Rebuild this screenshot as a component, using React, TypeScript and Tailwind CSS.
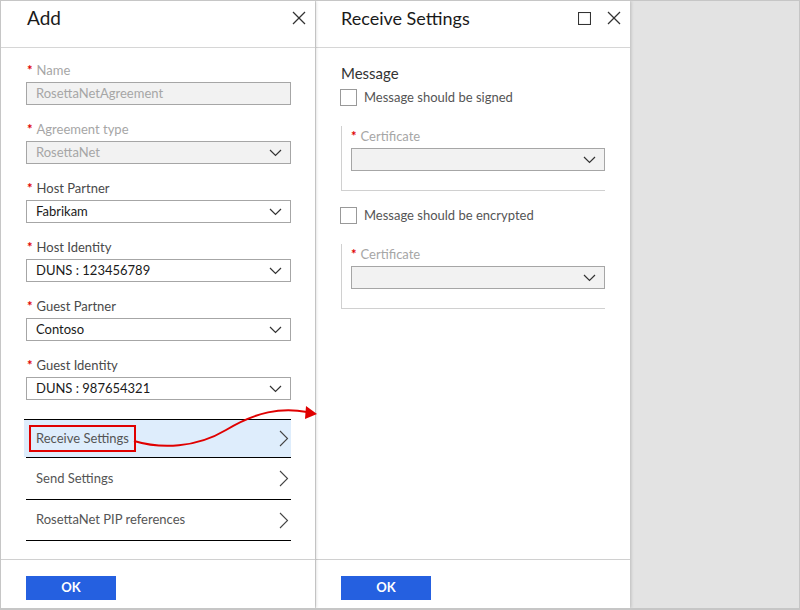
import React from 'react';

// 공통 아이콘
const ChevronDown = () => (
  <svg width="13" height="8" viewBox="0 0 13 8" className="shrink-0">
    <polyline points="1,1 6.5,6.5 12,1" fill="none" stroke="#333" strokeWidth="1.2" />
  </svg>
);

const ChevronRight = () => (
  <svg width="10" height="17" viewBox="0 0 10 17" className="shrink-0">
    <polyline points="1,1 8.5,8.5 1,16" fill="none" stroke="#444" strokeWidth="1.1" />
  </svg>
);

const CloseIcon = () => (
  <svg width="14" height="14" viewBox="0 0 14 14">
    <line x1="1" y1="1" x2="13" y2="13" stroke="#333" strokeWidth="1.2" />
    <line x1="13" y1="1" x2="1" y2="13" stroke="#333" strokeWidth="1.2" />
  </svg>
);

const MaxIcon = () => (
  <svg width="13" height="13" viewBox="0 0 13 13">
    <rect x="0.5" y="0.5" width="12" height="12" fill="none" stroke="#333" strokeWidth="1.1" />
  </svg>
);

const Star = () => <span className="mr-[4px] text-[13px] font-bold text-[#e00000]">*</span>;

type Field = { label: string; value: string; disabled?: boolean; select?: boolean };

const fields: Field[] = [
  { label: 'Name', value: 'RosettaNetAgreement', disabled: true },
  { label: 'Agreement type', value: 'RosettaNet', disabled: true, select: true },
  { label: 'Host Partner', value: 'Fabrikam', select: true },
  { label: 'Host Identity', value: 'DUNS : 123456789', select: true },
  { label: 'Guest Partner', value: 'Contoso', select: true },
  { label: 'Guest Identity', value: 'DUNS : 987654321', select: true },
];

function FormField({ f }: { f: Field }) {
  return (
    <div className="mb-[16px]">
      <div className={`flex h-[18px] items-center pl-[1px] text-[13px] ${f.disabled ? 'text-[#a6a6a6]' : 'text-[#4a4a4a]'}`}>
        <Star />
        {f.label}
      </div>
      <div
        className={`mt-[2px] flex h-[23px] w-[265px] items-center justify-between border border-[#a6a6a6] pl-[9px] pr-[8px] text-[13px] ${
          f.disabled ? 'bg-[#f2f2f2] text-[#a6a6a6]' : 'bg-white text-[#1a1a1a]'
        }`}
      >
        <span>{f.value}</span>
        {f.select && <ChevronDown />}
      </div>
    </div>
  );
}

function Certificate() {
  return (
    <div className="w-[264px] border-b border-l border-[#d0d0d0] pb-[19px] pl-[9px] pt-[2px]">
      <div className="flex h-[18px] items-center text-[13px] text-[#a6a6a6]">
        <Star />
        Certificate
      </div>
      <div className="mt-[2px] flex h-[23px] w-[254px] items-center justify-end border border-[#a6a6a6] bg-[#f2f2f2] pr-[8px]">
        <ChevronDown />
      </div>
    </div>
  );
}

function Checkbox({ label }: { label: string }) {
  return (
    <div className="flex h-[17px] items-center">
      <span className="ml-[-1px] h-[17px] w-[17px] border border-[#999] bg-white" />
      <span className="ml-[7px] text-[13px] text-[#555]">{label}</span>
    </div>
  );
}

function OkButton() {
  return (
    <div className="flex h-[24px] w-[90px] items-center justify-center bg-[#2560e0] text-[13px] font-bold text-white">
      OK
    </div>
  );
}

export default function App() {
  return (
    <div className="relative h-[610px] w-[800px] overflow-hidden border border-b-2 border-[#c6c6c6] bg-[#e3e3e3] font-['Lato','Noto_Sans',sans-serif]">
      <div className="flex h-full">
        {/* 왼쪽 패널 */}
        <div className="relative z-10 flex h-full w-[314px] flex-col bg-white shadow-[1px_0_3px_rgba(0,0,0,0.18)]">
          <div className="flex h-[47px] shrink-0 items-center justify-between border-b border-[#d6d6d6] pb-[12px] pl-[26px] pr-[9px]">
            <span className="text-[19px] text-[#1a1a1a]">Add</span>
            <CloseIcon />
          </div>

          <div className="flex flex-1 flex-col pl-[25px] pt-[14px]">
            {fields.map((f) => (
              <FormField key={f.label} f={f} />
            ))}

            <div className="mt-[3px] w-[265px]">
              <div className="-ml-[2px] flex h-[38px] items-center justify-between border-t border-black bg-[#deedfc] pl-[5px] pr-[2px]">
                <span className="border-2 border-[#e00000] px-[5px] py-[2px] text-[13px] text-[#555]">Receive Settings</span>
                <ChevronRight />
              </div>
              <div className="flex h-[42px] items-center justify-between border-t border-black pl-[10px] pr-[2px] text-[13px] text-[#555]">
                <span>Send Settings</span>
                <ChevronRight />
              </div>
              <div className="flex h-[42px] items-center justify-between border-y border-black pl-[10px] pr-[2px] text-[13px] text-[#555]">
                <span>RosettaNet PIP references</span>
                <ChevronRight />
              </div>
            </div>
          </div>

          <div className="h-[49px] shrink-0 border-t border-[#d0d0d0] pl-[25px] pt-[16px]">
            <OkButton />
          </div>
        </div>

        {/* 오른쪽 패널 */}
        <div className="relative z-[5] ml-[1px] flex h-full w-[314px] flex-col bg-white shadow-[1px_0_3px_rgba(0,0,0,0.18)]">
          <div className="flex h-[47px] shrink-0 items-center border-b border-[#d6d6d6] pb-[12px] pl-[25px] pr-[9px]">
            <span className="flex-1 text-[18px] text-[#1a1a1a]">Receive Settings</span>
            <MaxIcon />
            <span className="ml-[16px]">
              <CloseIcon />
            </span>
          </div>

          <div className="flex flex-1 flex-col pl-[25px] pt-[15px]">
            <div className="text-[15px] leading-[20px] text-[#333]">Message</div>
            <div className="mt-[6px]">
              <Checkbox label="Message should be signed" />
            </div>
            <div className="mt-[20px]">
              <Certificate />
            </div>
            <div className="mt-[16px]">
              <Checkbox label="Message should be encrypted" />
            </div>
            <div className="mt-[20px]">
              <Certificate />
            </div>
          </div>

          <div className="h-[49px] shrink-0 border-t border-[#d0d0d0] pl-[25px] pt-[16px]">
            <OkButton />
          </div>
        </div>
      </div>

      {/* 빨간 화살표 */}
      <svg className="pointer-events-none absolute left-0 top-0 z-20" width="800" height="610">
        <path d="M133 440 C 160 448, 195 447, 225 429 C 255 411, 280 406, 306 411" fill="none" stroke="#e00000" strokeWidth="2" />
        <polygon points="305,405 316,413 304,418" fill="#e00000" />
      </svg>
    </div>
  );
}
